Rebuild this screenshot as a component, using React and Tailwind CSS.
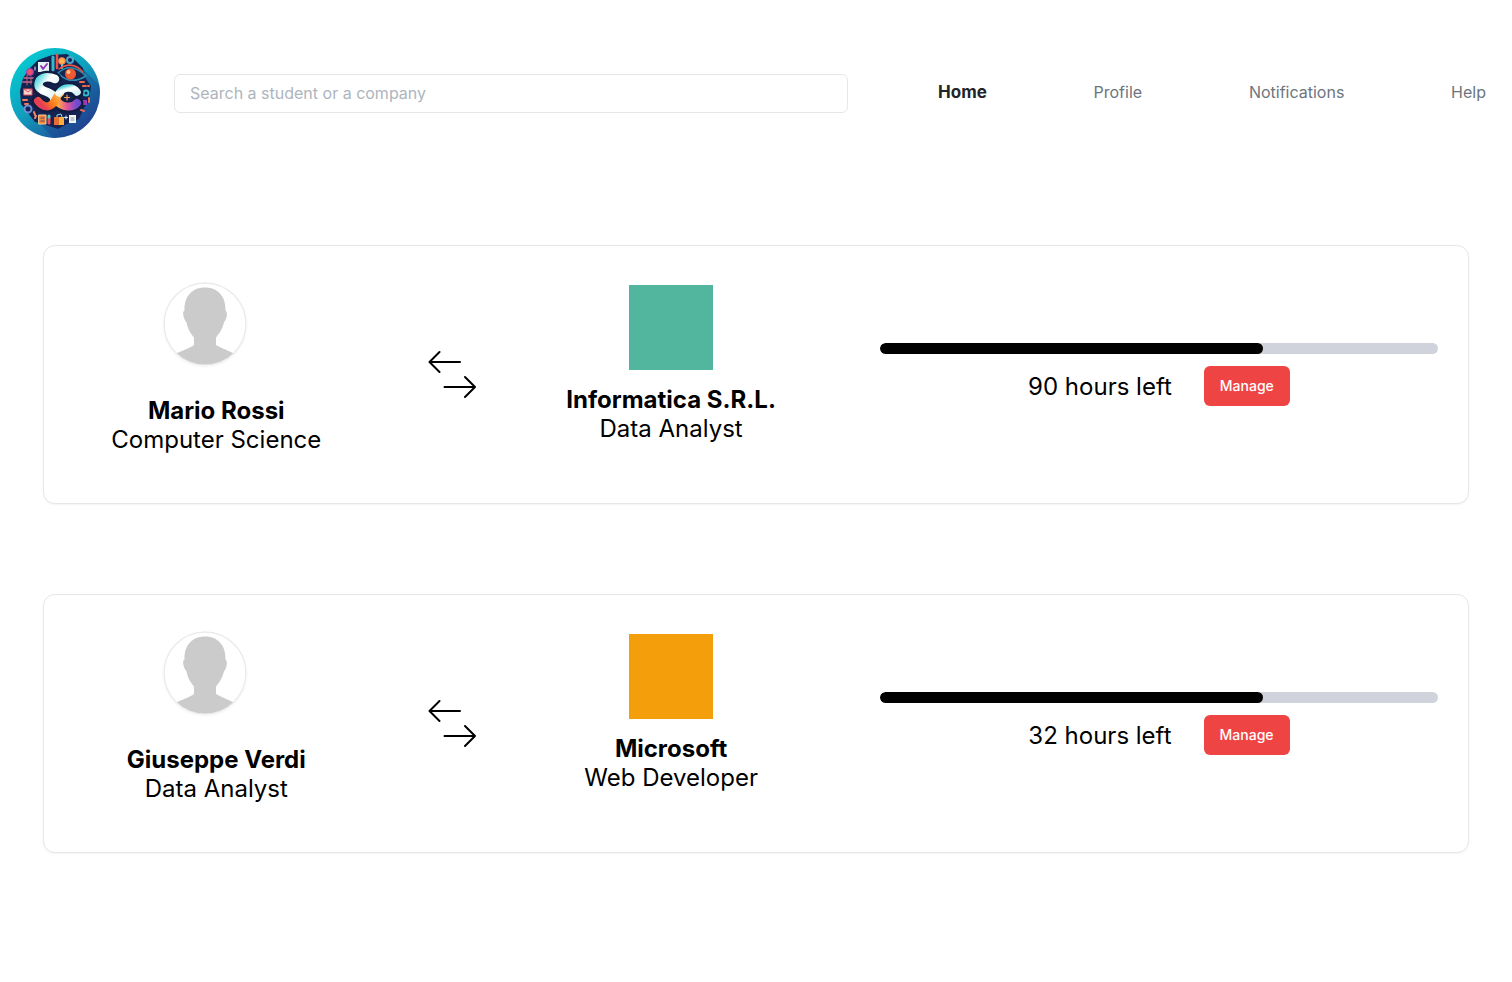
import React from "react";

const placements = [
  { student: "Mario Rossi", field: "Computer Science", company: "Informatica S.R.L.", role: "Data Analyst", hours: 90, color: "bg-[#52b69f]" },
  { student: "Giuseppe Verdi", field: "Data Analyst", company: "Microsoft", role: "Web Developer", hours: 32, color: "bg-[#f59e0b]" },
];

const navItems = ["Home", "Profile", "Notifications", "Help"];

function Logo() {
  return (
    <svg viewBox="0 0 90 90" className="size-[90px] shrink-0" role="img" aria-label="SC logo">
      <defs>
        <linearGradient id="disc" x1="0.1" y1="0" x2="0.85" y2="0.95">
          <stop offset="0" stopColor="#04d3d4" />
          <stop offset="0.5" stopColor="#109fbe" />
          <stop offset="1" stopColor="#233f92" />
        </linearGradient>
        <linearGradient id="cyan" x1="0" y1="0" x2="1" y2="1">
          <stop offset="0" stopColor="#5ed9e0" />
          <stop offset="0.35" stopColor="#ffffff" />
          <stop offset="1" stopColor="#d9f4f5" />
        </linearGradient>
        <linearGradient id="flame" x1="0" y1="0.5" x2="1" y2="0">
          <stop offset="0" stopColor="#e83e55" />
          <stop offset="0.4" stopColor="#fb7c16" />
          <stop offset="1" stopColor="#ffc05a" />
        </linearGradient>
        <linearGradient id="violet" x1="0" y1="0" x2="1" y2="0">
          <stop offset="0" stopColor="#ffb13c" />
          <stop offset="0.5" stopColor="#e0559a" />
          <stop offset="1" stopColor="#6f4bd1" />
        </linearGradient>
        <clipPath id="discClip"><circle cx="45" cy="45" r="45" /></clipPath>
      </defs>
      <circle cx="45" cy="45" r="45" fill="url(#disc)" />
      <path d="M74 22 98 46V96H48L25 70Z" fill="#1c3886" opacity="0.35" clipPath="url(#discClip)" />
      <path d="M28 12 42 7 57 6 66 13 73 20 76 31 81 38 79 53 74 60 69 71 57 76 48 81 36 77 25 74 18 65 11 56 10 43 13 30 20 20Z" fill="#142351" />
      <g strokeLinecap="round" strokeLinejoin="round">
        <path d="M28 14h11v10H28z" fill="#e5f5f6" />
        <path d="m31 18 2 3 4-5" fill="none" stroke="#913bc0" strokeWidth="2" />
        <path d="M43 9v13" stroke="#35b9c9" strokeWidth="3" />
        <path d="M47 7v13" stroke="#ee5148" strokeWidth="2.5" />
        <circle cx="52" cy="13" r="3.5" fill="#ffb44c" stroke="#ee644a" />
        <path d="M52 17v3" stroke="#61cad0" strokeWidth="2" />
        <circle cx="60" cy="12" r="3" fill="none" stroke="#4da6c8" strokeWidth="2" />
        <path d="M48 25Q61 13 76 28Q60 38 48 25Z" fill="#18264e" stroke="#2c8fb5" strokeWidth="1.5" />
        <path d="M49 21Q62 12 73 24" fill="none" stroke="#e85844" strokeWidth="1.5" />
        <circle cx="60.5" cy="26" r="5.5" fill="#ef5835" />
        <circle cx="58.5" cy="24" r="2" fill="#ffc37e" />
        <circle cx="20" cy="24" r="3.5" fill="#e85168" stroke="#983bc2" />
        <path d="M14 30h9M13 34h10" stroke="#8d5c8d" strokeWidth="2" />
        <path d="M17 27v10M21 29v7" stroke="#d45969" strokeWidth="1" />
        <path d="M14 41h8v6h-8z" fill="#f8d7cf" stroke="#e34f5d" />
        <path d="m14 41 4 3 4-3" fill="none" stroke="#df4961" />
        <path d="M13 52h4M15 56h3" stroke="#f07c59" strokeWidth="2" />
        <circle cx="18" cy="61" r="3.5" fill="none" stroke="#6d8dd5" strokeWidth="2" />
        <path d="m24 64 1 3M25 70l1-2" stroke="#f58a73" strokeWidth="2" />
        <path d="M29 67h7v9h-7z" fill="#ed843a" stroke="#ffcf91" />
        <path d="M31 70h3M31 73h3" stroke="#5e4a85" />
        <path d="M39 70v5" stroke="#e94d5f" strokeWidth="3" />
        <path d="M39 68v1" stroke="#52d1d1" strokeWidth="3" />
        <path d="M44 69h10v8H44z" fill="#ffad3d" />
        <path d="M44 69h5v8h-5z" fill="#e76c32" />
        <path d="M47 69v-2l4-1 1 3" fill="none" stroke="#9dd9df" />
        <path d="M59 67h7v8h-7z" fill="#f3f4ed" />
        <path d="M61 70h3M61 72h3" stroke="#839ab1" />
        <path d="M70 34h4M73 38h3M78 38h1" stroke="#f16a49" strokeWidth="2" />
        <circle cx="76" cy="45" r="2.5" fill="none" stroke="#31bccc" strokeWidth="2" />
        <path d="M73 52h4v5h-4z" fill="#9a3bbb" />
        <path d="M79 50v4M71 62l3 1" stroke="#e86950" strokeWidth="2" />
        <path d="M56 68v3M54.5 69.500h3M25 19v3" stroke="#e6efff" />
      </g>
      <g fill="none" strokeLinecap="round" strokeLinejoin="round">
        <path d="M45 31C38 28 31 29 29 34C27 39 31 42 37 44C42 46 47 50 44 55C40 60 33 59 28 53M43 56C48 51 49 43 57 41C62 40 66 42 67 44M47 53C52 60 63 60 67 55" stroke="#111c42" strokeWidth="13" />
        <path d="M45 31C38 28 31 29 29 34C27 39 31 42 37 44C42 46 46 49 44 54" stroke="url(#cyan)" strokeWidth="8.5" />
        <path d="M47 53C52 60 63 60 67 55" stroke="url(#violet)" strokeWidth="8" />
        <path d="M28 53C33 60 40 60 44 54C47 50 47 47 50 45" stroke="url(#flame)" strokeWidth="8" />
        <path d="M49 45C53 39 63 38 67 44" stroke="url(#cyan)" strokeWidth="7.500" />
        <path d="M57 47v5M54.500 49.500h5" stroke="#ff9c55" strokeWidth="1.200" />
      </g>
    </svg>
  );
}

function Avatar() {
  return (
    <svg viewBox="0 0 84 84" className="size-[84px] rounded-full bg-white shadow-xs" role="img" aria-label="Student picture">
      <defs><clipPath id="avatarClip"><circle cx="42" cy="42" r="40.5" /></clipPath></defs>
      <circle cx="42" cy="42" r="41" fill="#fff" stroke="#ebebeb" strokeWidth="1.5" />
      <path clipPath="url(#avatarClip)" fill="#cbcbcb" d="M42 5.500C29 5.500 21 14.500 21.500 28.500C18.500 30.500 21 37.500 23.500 40.500C25 47.500 27 50.500 31 55.500V63C27 66 18 69 12 72V84H72V72C66 69 58 66 53 63V55.500C57 50.500 59 47.500 61 40.500C64 36.500 65 30.500 62.500 28.500C63 14.500 55 5.500 42 5.500Z" />
    </svg>
  );
}

function Exchange() {
  return (
    <svg viewBox="0 0 48 50" className="h-[50px] w-12" fill="none" stroke="#000" strokeWidth="2" strokeLinecap="round" strokeLinejoin="round" aria-hidden="true">
      <path d="M32 12H1.500M11.500 2l-10 10 10 10M16.500 37H47M37 27l10 10-10 10" />
    </svg>
  );
}

function Placement({ item }) {
  return (
    <article className="grid h-[259px] grid-cols-[345fr_128fr_310fr_643fr] rounded-xl border border-gray-200 bg-white shadow-xs">
      <div className="flex flex-col items-center pt-9">
        <div className="pr-[22px]"><Avatar /></div>
        <div className="mt-[30px] text-center">
          <h2 className="font-bold">{item.student}</h2>
          <p>{item.field}</p>
        </div>
      </div>
      <div className="flex items-center justify-center"><Exchange /></div>
      <div className="flex flex-col items-center pt-[39px] text-center">
        <div className={`h-[85px] w-[84px] ${item.color}`} />
        <h2 className="mt-[15px] font-bold">{item.company}</h2>
        <p>{item.role}</p>
      </div>
      <div className="pt-[97px] pr-[30px] pl-[54px]">
        <div className="h-[11px] overflow-hidden rounded-full bg-[#d1d3dc]" role="progressbar" aria-label="Hours completed" aria-valuenow={69} aria-valuemin={0} aria-valuemax={100}>
          <div className="h-full w-[68.6%] rounded-full bg-black" />
        </div>
        <div className="mt-3 flex items-center justify-center gap-8">
          <p>{item.hours} hours left</p>
          <button type="button" className="h-10 rounded-md bg-[#ef4444] px-4 text-sm font-medium text-white">Manage</button>
        </div>
      </div>
    </article>
  );
}

export default function App() {
  return (
    <div className="min-h-screen bg-white font-[Inter,sans-serif] text-2xl leading-[29px] text-black">
      <header className="flex items-center pt-12 pr-[26px] pl-[10px]">
        <Logo />
        <div className="ml-[74px] flex min-w-0 flex-[674]">
          <input
            type="search"
            aria-label="Search a student or a company"
            placeholder="Search a student or a company"
            className="h-[39px] w-full rounded-md border border-[#e5e7eb] px-[15px] text-base placeholder:text-[#adb5bd]"
          />
        </div>
        <nav className="ml-[90px] flex flex-[548] items-baseline justify-between text-base text-[#6c757d]">
          {navItems.map((name) => (
            <a key={name} href={`#${name.toLowerCase()}`} className={name === "Home" ? "text-[17px] font-bold text-[#212529]" : ""}>{name}</a>
          ))}
        </nav>
      </header>
      <main className="mt-[107px] flex flex-col gap-[90px] px-[43px] pb-12">
        {placements.map((item) => <Placement key={item.student} item={item} />)}
      </main>
    </div>
  );
}
